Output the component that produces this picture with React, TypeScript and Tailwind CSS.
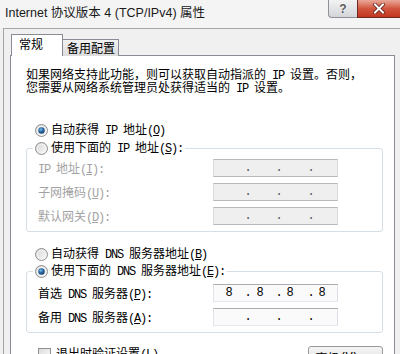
import React from "react";

const M = ({ children }: { children: React.ReactNode }) => (
  <span className="font-['Liberation_Mono',monospace] tracking-[-1.2px] whitespace-pre">{children}</span>
);

const Radio = ({ checked }: { checked?: boolean }) => (
  <svg width="13" height="13" viewBox="0 0 13 13" className="shrink-0">
    <defs>
      <linearGradient id="rgOuter" x1="0" y1="0" x2="1" y2="1">
        <stop offset="0" stopColor="#d4d4d4" />
        <stop offset="1" stopColor="#fbfbfb" />
      </linearGradient>
      <radialGradient id="rgDot" cx="0.4" cy="0.35" r="0.75">
        <stop offset="0" stopColor="#7cc3ef" />
        <stop offset="0.45" stopColor="#2b6aa6" />
        <stop offset="1" stopColor="#0d3560" />
      </radialGradient>
    </defs>
    <circle cx="6.5" cy="6.5" r="6" fill="url(#rgOuter)" stroke="#8e8f8f" strokeWidth="1" />
    <circle cx="6.5" cy="6.5" r="4.2" fill="none" stroke="#f4f4f4" strokeWidth="1" />
    {checked && <circle cx="6.5" cy="6.5" r="3.2" fill="url(#rgDot)" />}
  </svg>
);

const IpBox = ({ disabled, value }: { disabled?: boolean; value?: string[] }) => {
  const v = value ?? ["", "", "", ""];
  const dot = disabled ? "text-[#555]" : "text-black";
  return (
    <div
      className={
        disabled
          ? "flex h-[18px] w-[125px] shrink-0 items-center border border-[#b9b9b9] border-l-[#dadada] border-r-[#dadada] bg-[#efefef] font-['Liberation_Mono',monospace] text-[12px] leading-[16px]"
          : "flex h-[18px] w-[125px] shrink-0 items-center border border-[#abadb3] border-l-[#e2e3ea] border-r-[#dbdfe6] border-b-[#e3e9ef] bg-[#fafafa] font-['Liberation_Mono',monospace] text-[12px] leading-[16px]"
      }
    >
      <span className="w-[30px] text-center">{v[0]}</span>
      <span className={"w-[8px] text-center " + dot}>.</span>
      <span className="w-[16px] text-center">{v[1]}</span>
      <span className="w-[7px]" />
      <span className={"w-[8px] text-center " + dot}>.</span>
      <span className="w-[14px] text-center">{v[2]}</span>
      <span className="w-[10px]" />
      <span className={"w-[8px] text-center " + dot}>.</span>
      <span className="w-[14px] text-center">{v[3]}</span>
    </div>
  );
};

const Row = ({ label, disabled, value }: { label: React.ReactNode; disabled?: boolean; value?: string[] }) => (
  <div className="flex h-[18px] items-center">
    <span className={disabled ? "w-[175px] pt-[2px] text-[#a3a3a3]" : "w-[175px] pt-[2px] text-black"}>{label}</span>
    <IpBox disabled={disabled} value={value} />
  </div>
);

export default function App() {
  return (
    <div className="h-[354px] w-[400px] overflow-hidden bg-[#f0f0f0] font-['Noto_Sans_CJK_SC',sans-serif] text-[12px] text-black">
      {/* title bar */}
      <div className="flex h-[28px] items-start justify-between bg-[#f4f4f4]">
        <div className="pl-[5px] pt-[5px] font-['Liberation_Sans','Noto_Sans_CJK_SC',sans-serif] text-[12.5px] leading-[16px] text-[#1a1a1a]">
          Internet 协议版本 4 (TCP/IPv4) 属性
        </div>
        <div className="flex">
          <div className="flex h-[18px] w-[29px] items-center justify-center rounded-bl-[4px] border border-t-0 border-r-0 border-[#8d9096] bg-gradient-to-b from-[#f3f3f3] to-[#d3d5d8]">
            <span className="font-['Liberation_Sans',sans-serif] text-[12px] font-bold leading-[14px] text-[#5a5a5a] [text-shadow:0_0_2px_#ffffff]">?</span>
          </div>
          <div className="flex h-[18px] w-[43px] items-center justify-center border-b border-l border-[#6e2a22] bg-gradient-to-b from-[#e9a898] via-[#d2553f] to-[#c2351f]">
            <svg width="12" height="11" viewBox="0 0 12 11">
              <path d="M2 1.5 L10 9.5 M10 1.5 L2 9.5" stroke="#5a1d14" strokeWidth="3.6" strokeLinecap="square" />
              <path d="M2 1.5 L10 9.5 M10 1.5 L2 9.5" stroke="#ffffff" strokeWidth="2" strokeLinecap="square" />
            </svg>
          </div>
        </div>
      </div>

      {/* client area */}
      <div className="ml-[3px] border-l border-t border-[#a5a5a5] pl-[6px] pt-[5px]">
        {/* tabs */}
        <div className="-mb-px flex items-end pl-px">
          <div className="relative z-10 h-[22px] w-[52px] border border-b-0 border-[#898c95] bg-white pl-[7px] pt-px leading-[16px]">
            常规
          </div>
          <div className="h-[17px] w-[56px] border-r border-t border-[#898c95] bg-gradient-to-b from-[#f2f2f2] to-[#dcdcdc] pl-[4px] leading-[15px]">
            备用配置
          </div>
        </div>

        {/* pane */}
        <div className="h-[310px] w-[385px] border border-[#898c95] bg-white pl-[15px] pt-[11px]">
          <div className="flex flex-col">
            <div className="h-[13px] whitespace-nowrap leading-[13px]">
              如果网络支持此功能，则可以获取自动指派的<M> IP </M>设置。否则，
            </div>
            <div className="h-[13px] whitespace-nowrap leading-[13px]">
              您需要从网络系统管理员处获得适当的<M> IP </M>设置。
            </div>
          </div>

          <div className="ml-[9px] mt-[29px] flex h-[16px] items-center gap-[3px]">
            <Radio checked />
            <span>
              自动获得<M> IP </M>地址<M>(<u>O</u>)</M>
            </span>
          </div>

          <fieldset className="mt-[2px] w-[357px] rounded-[3px] border border-[#d5dfe5] pb-[6px] pt-[3px]">
            <legend className="ml-[6px] px-[2px]">
              <div className="flex h-[16px] items-center gap-[3px]">
                <Radio />
                <span>
                  使用下面的<M> IP </M>地址<M>(<u>S</u>):</M>
                </span>
              </div>
            </legend>
            <div className="flex flex-col gap-[6px] pl-[11px]">
              <Row disabled label={<><M>IP </M>地址<M>(<u>I</u>):</M></>} />
              <Row disabled label={<>子网掩码<M>(<u>U</u>):</M></>} />
              <Row disabled label={<>默认网关<M>(<u>D</u>):</M></>} />
            </div>
          </fieldset>

          <div className="ml-[9px] mt-[14px] flex h-[16px] items-center gap-[3px]">
            <Radio />
            <span>
              自动获得<M> DNS </M>服务器地址<M>(<u>B</u>)</M>
            </span>
          </div>

          <fieldset className="mt-px w-[357px] rounded-[3px] border border-[#d5dfe5] pb-[6px] pt-[5px]">
            <legend className="ml-[6px] px-[2px]">
              <div className="flex h-[16px] items-center gap-[3px]">
                <Radio checked />
                <span>
                  使用下面的<M> DNS </M>服务器地址<M>(<u>E</u>):</M>
                </span>
              </div>
            </legend>
            <div className="flex flex-col gap-[6px] pl-[11px]">
              <Row label={<>首选<M> DNS </M>服务器<M>(<u>P</u>):</M></>} value={["8", "8", "8", "8"]} />
              <Row label={<>备用<M> DNS </M>服务器<M>(<u>A</u>):</M></>} />
            </div>
          </fieldset>

          <div className="mt-[13px] flex w-[357px] items-start justify-between">
            <div className="ml-[12px] flex items-center gap-[5px]">
              <div className="h-[13px] w-[13px] border border-[#8e8f8f] bg-gradient-to-br from-[#dcdcdc] to-[#fbfbfb]" />
              <span className="leading-[13px]">
                退出时验证设置<M>(<u>L</u>)</M>
              </span>
            </div>
            <div className="flex h-[23px] w-[75px] items-center justify-center rounded-[3px] border border-[#9a9a9a] bg-gradient-to-b from-[#f4f4f4] to-[#dedede]">
              高级<M>(<u>V</u>)...</M>
            </div>
          </div>
        </div>
      </div>
    </div>
  );
}
